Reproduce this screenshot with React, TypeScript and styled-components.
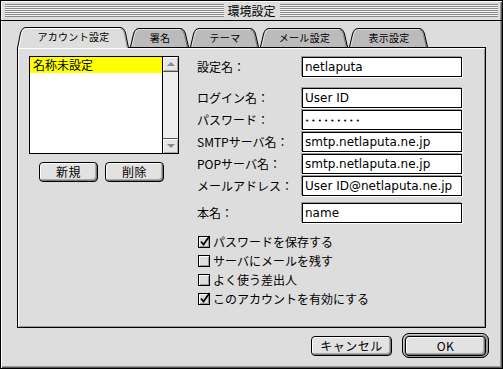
import React from "react";
import styled, { createGlobalStyle } from "styled-components";

const GlobalStyle = createGlobalStyle`
  html, body { margin: 0; padding: 0; background: #dddddd; }
  body {
    font-family: "Noto Sans CJK JP", sans-serif;
    font-size: 12px;
    color: #000;
  }
  * { box-sizing: border-box; }
`;

const Window = styled.div`
  width: 503px;
  height: 369px;
  border: 1px solid #000;
  background: #dddddd;
  display: flex;
  flex-direction: column;
  box-shadow: inset 1px 1px 0 #ffffff, inset -1px -1px 0 #555555, inset -2px -2px 0 #999999;
`;

const TitleBar = styled.div`
  height: 20px;
  padding: 3px 4px 3px 4px;
  border-bottom: 1px solid #000;
  display: flex;
  align-items: center;
`;

const Stripes = styled.div`
  flex: 1;
  height: 13px;
  background: repeating-linear-gradient(
    to bottom,
    #8a8a8a 0px,
    #8a8a8a 1px,
    #f4f4f4 1px,
    #f4f4f4 2px
  );
`;

const Title = styled.span`
  padding: 0 4px;
  font-size: 12px;
  line-height: 14px;
`;

const Body = styled.div`
  flex: 1;
  padding: 6px 13px 0 16px;
  display: flex;
  flex-direction: column;
`;

const TabRow = styled.div`
  height: 21px;
  margin-bottom: -1px;
  display: flex;
  align-items: flex-end;
  position: relative;
  z-index: 1;
`;

const TabItem = styled.div<{ $w: number; $active?: boolean }>`
  position: relative;
  width: ${(p) => p.$w}px;
  height: ${(p) => (p.$active ? 21 : 19)}px;
  margin-bottom: ${(p) => (p.$active ? 0 : 1)}px;
  display: flex;
  align-items: center;
  justify-content: center;
  font-size: 10px;
  line-height: 12px;
  padding-bottom: ${(p) => (p.$active ? 1 : 0)}px;
`;

const TabSvg = styled.svg`
  position: absolute;
  left: 0;
  top: 0;
`;

const TabLabel = styled.span`
  position: relative;
  letter-spacing: 0.3px;
`;

const Tab: React.FC<{ w: number; active?: boolean; label: string }> = ({ w, active, label }) => {
  const h = active ? 21 : 19;
  const outline = `M0.5 ${h} L3.5 6 Q5 0.5 9 0.5 L${w - 10} 0.5 Q${w - 6} 0.5 ${w - 4.5} 6 L${w - 1.5} ${h}`;
  const hi = `M1.8 ${h} L4.6 6.5 Q6 1.5 9 1.5 L${w - 10} 1.5`;
  const sh = `M${w - 9} 1.6 Q${w - 6.6} 2 ${w - 5.6} 6.5 L${w - 2.7} ${h}`;
  return (
    <TabItem $w={w} $active={active}>
      <TabSvg width={w} height={h} viewBox={`0 0 ${w} ${h}`}>
        <path d={outline + " Z"} fill={active ? "#dddddd" : "#bbbbbb"} />
        <path d={hi} fill="none" stroke={active ? "#ffffff" : "#dddddd"} strokeWidth="1" />
        <path d={sh} fill="none" stroke={active ? "#999999" : "#7a7a7a"} strokeWidth="1" />
        <path d={outline} fill="none" stroke="#000" strokeWidth="1" />
      </TabSvg>
      <TabLabel>{label}</TabLabel>
    </TabItem>
  );
};

const Panel = styled.div`
  width: 469px;
  height: 281px;
  border: 1px solid #000;
  background: #dddddd;
  box-shadow: inset 1px 1px 0 #ffffff, inset -1px -1px 0 #999999;
  display: flex;
  padding: 8px 0 0 11px;
  gap: 18px;
`;

const LeftCol = styled.div`
  width: 150px;
  display: flex;
  flex-direction: column;
  gap: 8px;
`;

const ListBox = styled.div`
  width: 150px;
  height: 98px;
  border: 1px solid #000;
  background: #fff;
  display: flex;
`;

const ListItems = styled.div`
  flex: 1;
  display: flex;
  flex-direction: column;
`;

const ListRow = styled.div<{ $selected?: boolean }>`
  height: 16px;
  padding-left: 3px;
  background: ${(p) => (p.$selected ? "#ffff00" : "transparent")};
  font-size: 12px;
  line-height: 16px;
`;

const ScrollBar = styled.div`
  width: 16px;
  border-left: 1px solid #000;
  background: #eeeeee;
  display: flex;
  flex-direction: column;
  justify-content: space-between;
`;

const ArrowBox = styled.div<{ $down?: boolean }>`
  height: 15px;
  background: #e6e6e6;
  box-shadow: inset 1px 1px 0 #ffffff, inset -1px -1px 0 #aaaaaa;
  ${(p) => (p.$down ? "border-top: 1px solid #555;" : "border-bottom: 1px solid #555;")}
  display: flex;
  align-items: center;
  justify-content: center;
  &::after {
    content: "";
    width: 0;
    height: 0;
    border-left: 4px solid transparent;
    border-right: 4px solid transparent;
    ${(p) => (p.$down ? "border-top: 4px solid #8a8a8a;" : "border-bottom: 4px solid #8a8a8a;")}
  }
`;

const ButtonRow = styled.div`
  display: flex;
  gap: 7px;
  padding-left: 10px;
`;

const PushButton = styled.button<{ $w: number }>`
  width: ${(p) => p.$w}px;
  height: 20px;
  padding: 0;
  border: 1px solid #000;
  border-radius: 4px;
  background: #e2e2e2;
  box-shadow: inset 1px 1px 0 #ffffff, inset -1px -1px 0 #777777, inset -2px -2px 0 #aaaaaa;
  font-family: "Noto Sans CJK JP", sans-serif;
  font-size: 12px;
  line-height: 16px;
  color: #000;
  letter-spacing: 0.5px;
`;

const Form = styled.div`
  display: flex;
  flex-direction: column;
  padding-top: 1px;
`;

const Field = styled.div<{ $gap: number }>`
  display: flex;
  align-items: center;
  height: 20px;
  margin-top: ${(p) => p.$gap}px;
`;

const Label = styled.span`
  width: 105px;
  flex: none;
  font-size: 12px;
  line-height: 14px;
`;

const TextBox = styled.div`
  width: 160px;
  height: 20px;
  border: 1px solid #000;
  background: #fff;
  box-shadow: -1px -1px 0 #999999, 1px 1px 0 #ffffff;
  padding-left: 2px;
  font-family: "DejaVu Sans", sans-serif;
  font-size: 12px;
  line-height: 18px;
  white-space: nowrap;
  overflow: hidden;
`;

const Dots = styled.span`
  font-size: 7px;
  letter-spacing: 2.2px;
  vertical-align: 1px;
`;

const CheckRow = styled.div<{ $gap: number }>`
  display: flex;
  align-items: center;
  height: 19px;
  margin-top: ${(p) => p.$gap}px;
  padding-left: 1px;
  gap: 3px;
  font-size: 12px;
`;

const CheckBoxBox = styled.span`
  position: relative;
  width: 12px;
  height: 12px;
  border: 1px solid #000;
  background: #dddddd;
  box-shadow: inset 1px 1px 0 #ffffff, inset -1px -1px 0 #999999;
`;

const CheckMark = styled.svg`
  position: absolute;
  left: 0px;
  top: -2px;
`;

const CheckBox: React.FC<{ checked?: boolean; label: string; gap: number }> = ({ checked, label, gap }) => (
  <CheckRow $gap={gap}>
    <CheckBoxBox>
      {checked && (
        <CheckMark width="12" height="12" viewBox="0 0 12 12">
          <path d="M2 6.5 L4.5 9.5 L10.5 1" fill="none" stroke="#000" strokeWidth="1.7" />
        </CheckMark>
      )}
    </CheckBoxBox>
    <span>{label}</span>
  </CheckRow>
);

const Footer = styled.div`
  margin-top: 5px;
  height: 25px;
  display: flex;
  justify-content: flex-end;
  align-items: center;
  gap: 10px;
`;

const DefaultRing = styled.div`
  width: 87px;
  height: 25px;
  border: 1px solid #000;
  border-radius: 7px;
  padding: 2px;
  background: #999999;
  box-shadow: inset 1px 1px 0 #cccccc;
  display: flex;
`;

const fields: { label: string; value: React.ReactNode; gap: number }[] = [
  { label: "設定名：", value: "netlaputa", gap: 0 },
  { label: "ログイン名：", value: "User ID", gap: 11 },
  { label: "パスワード：", value: <Dots>•••••••••</Dots>, gap: 2 },
  { label: "SMTPサーバ名：", value: "smtp.netlaputa.ne.jp", gap: 2 },
  { label: "POPサーバ名：", value: "smtp.netlaputa.ne.jp", gap: 2 },
  { label: "メールアドレス：", value: "User ID@netlaputa.ne.jp", gap: 2 },
  { label: "本名：", value: "name", gap: 7 },
];

const checks = [
  { label: "パスワードを保存する", checked: true, gap: 9 },
  { label: "サーバにメールを残す", checked: false, gap: 0 },
  { label: "よく使う差出人", checked: false, gap: 0 },
  { label: "このアカウントを有効にする", checked: true, gap: 0 },
];

export default function App() {
  return (
    <>
      <GlobalStyle />
      <Window>
        <TitleBar>
          <Stripes />
          <Title>環境設定</Title>
          <Stripes />
        </TitleBar>
        <Body>
          <TabRow>
            <Tab w={113} active label="アカウント設定" />
            <Tab w={60} label="署名" />
            <Tab w={70} label="テーマ" />
            <Tab w={89} label="メール設定" />
            <Tab w={80} label="表示設定" />
          </TabRow>
          <Panel>
            <LeftCol>
              <ListBox>
                <ListItems>
                  <ListRow $selected>名称未設定</ListRow>
                </ListItems>
                <ScrollBar>
                  <ArrowBox />
                  <ArrowBox $down />
                </ScrollBar>
              </ListBox>
              <ButtonRow>
                <PushButton $w={59}>新規</PushButton>
                <PushButton $w={59}>削除</PushButton>
              </ButtonRow>
            </LeftCol>
            <Form>
              {fields.map((f) => (
                <Field key={f.label} $gap={f.gap}>
                  <Label>{f.label}</Label>
                  <TextBox>{f.value}</TextBox>
                </Field>
              ))}
              {checks.map((c) => (
                <CheckBox key={c.label} label={c.label} checked={c.checked} gap={c.gap} />
              ))}
            </Form>
          </Panel>
          <Footer>
            <PushButton $w={81}>キャンセル</PushButton>
            <DefaultRing>
              <PushButton $w={81}>OK</PushButton>
            </DefaultRing>
          </Footer>
        </Body>
      </Window>
    </>
  );
}
